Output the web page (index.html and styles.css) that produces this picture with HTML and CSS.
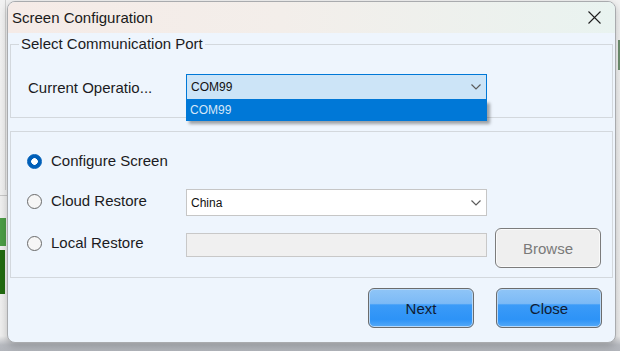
FILE: index.html
```html
<!DOCTYPE html>
<html lang="en">
<head>
  <meta charset="UTF-8">
  <meta name="viewport" content="width=device-width, initial-scale=1">
  <title>Screen Configuration</title>
  <link rel="stylesheet" href="styles.css">
</head>
<body>

  <div class="window">
    <!-- title bar -->
    <div class="titlebar">
      <span class="title">Screen Configuration</span>
      <svg class="close-x" width="13" height="13" viewBox="0 0 13 13">
        <path d="M0.5 0.5 L12.5 12.5 M12.5 0.5 L0.5 12.5" stroke="#1f1f1f" stroke-width="1.1" fill="none"/>
      </svg>
    </div>

    <div class="content">
      <!-- port selection -->
      <fieldset class="group port">
        <legend>Select Communication Port</legend>
        <div class="row">
          <span class="label">Current Operatio...</span>
          <div class="combo active">
            <span>COM99</span>
            <svg class="chevron" width="10" height="6" viewBox="0 0 10 6">
              <path d="M0.5 0.5 L5 5 L9.5 0.5" stroke="#5c5c5c" stroke-width="1.2" fill="none"/>
            </svg>
            <div class="popup">COM99</div>
          </div>
        </div>
      </fieldset>

      <!-- mode selection -->
      <fieldset class="group mode">
        <div class="row opt">
          <span class="choice"><span class="radio checked"></span>Configure Screen</span>
        </div>
        <div class="row opt">
          <span class="choice"><span class="radio"></span>Cloud Restore</span>
          <div class="combo cloud">
            <span>China</span>
            <svg class="chevron" width="10" height="6" viewBox="0 0 10 6">
              <path d="M0.5 0.5 L5 5 L9.5 0.5" stroke="#5c5c5c" stroke-width="1.2" fill="none"/>
            </svg>
          </div>
        </div>
        <div class="row local">
          <span class="choice"><span class="radio"></span>Local Restore</span>
          <div class="path-box"></div>
          <button class="btn btn-plain">Browse</button>
        </div>
      </fieldset>

      <div class="actions">
        <button class="btn btn-blue">Next</button>
        <button class="btn btn-blue">Close</button>
      </div>
    </div>
  </div>

</body>
</html>
```

FILE: styles.css
```css
/* page behind the dialog */
body {
  margin: 0;
  height: 351px;
  overflow: hidden;
  font-family: 'Liberation Sans', Arial, sans-serif;
  color: #1b1b22;
  background:
    linear-gradient(#c8c8c8, #c8c8c8) 0 195px / 7px 1px no-repeat,
    linear-gradient(#4c9d46, #4c9d46) 0 218px / 6px 28px no-repeat,
    linear-gradient(#226c10, #226c10) 0 250px / 5px 44px no-repeat,
    linear-gradient(#d2d2d2, #d2d2d2) 5px 0 / 1px 190px no-repeat,
    linear-gradient(#6e8f6f, #6e8f6f) 618px 40px / 2px 30px no-repeat,
    linear-gradient(#f2f2f2 0, #efefef 336px, #b6b9bf 345px, #b2b5bb 351px);
}

/* dialog frame */
.window {
  box-sizing: border-box;
  width: 609px;
  height: 342px;
  margin: 1px 0 0 7px;
  border: 1px solid #a9abae;
  border-radius: 8px;
  background: #eef5fd;
  overflow: hidden;
  box-shadow: 0 3px 8px rgba(0,0,0,0.22);
}
.titlebar {
  height: 31px;
  display: flex;
  align-items: center;
  justify-content: space-between;
  padding: 0 14px 0 4px;
  background: linear-gradient(to right, #f5ebe7, #f3eeea 45%, #e9f3f0);
  font-size: 15px;
  color: #1a1a1a;
}
.close-x {
  display: block;
}

/* group boxes */
.group {
  margin: 0 2px;
  padding: 0;
  border: 1px solid #d3d8dd;
  min-width: 0;
}
.port {
  margin-top: 3px;
  padding: 22px 0 17px 8px;
}
.port legend {
  padding: 0 2px;
  font-size: 15px;
  line-height: 16px;
}
.port .row {
  padding-left: 9px;
}
.mode {
  margin-top: 13px;
  padding: 9px 0 9px 16px;
}
.row {
  display: flex;
  align-items: center;
  font-size: 15px;
}
.label {
  width: 158px;
}
.opt {
  height: 40px;
}
.local {
  align-items: flex-start;
}
.choice {
  width: 159px;
  display: flex;
  align-items: center;
  line-height: 16px;
}
.local .choice {
  margin-top: 14px;
}

/* radio buttons */
.radio {
  box-sizing: border-box;
  width: 15px;
  height: 15px;
  margin-right: 9px;
  border: 1px solid #6a6a6a;
  border-radius: 50%;
  background: #f6f6f6;
}
.radio.checked {
  border-color: #005fb8;
  background: radial-gradient(circle, #fff 0, #fff 3px, #005fb8 3.6px);
}

/* combo boxes */
.combo {
  position: relative;
  box-sizing: border-box;
  width: 301px;
  height: 26px;
  display: flex;
  align-items: center;
  justify-content: space-between;
  padding: 0 5px 0 4px;
  border: 1px solid #c6c6c6;
  background: #fff;
  font-size: 12px;
  color: #111;
}
.combo.active {
  background: #cce4f7;
  border-color: #0078d7;
}
.combo.cloud {
  height: 27px;
  margin-top: 3px;
}
.popup {
  position: absolute;
  left: -1px;
  right: -1px;
  top: calc(100% + 1px);
  height: 21px;
  line-height: 21px;
  padding-left: 4px;
  background: #0078d7;
  color: #d6e7f8;
  box-shadow: 3px 3px 3px rgba(0,0,0,0.35);
}
.path-box {
  box-sizing: border-box;
  width: 301px;
  height: 24px;
  margin-top: 12px;
  border: 1px solid #c8c8c8;
  background: #f0f0f0;
}

/* push buttons */
.btn {
  box-sizing: border-box;
  width: 106px;
  height: 40px;
  border: 1px solid #6c6c6c;
  border-radius: 6px;
  font: 15px 'Liberation Sans', Arial, sans-serif;
  padding: 0;
}
.btn-plain {
  margin: 7px 0 0 8px;
  background: #efefef;
  color: #7a7a7a;
  border-color: #7c7c7c;
  box-shadow: inset 0 0 0 1px #fafafa;
}
.btn-blue {
  color: #101c33;
  background: linear-gradient(#8fc5f7 0, #7cbaf6 38%, #3b9bf8 42%, #2d93f7 80%, #55aaf8 100%);
  box-shadow: inset 0 0 0 1px #b7d8f8;
}
.actions {
  display: flex;
  justify-content: flex-end;
  gap: 22px;
  margin-top: 10px;
  padding-right: 13px;
}
```
